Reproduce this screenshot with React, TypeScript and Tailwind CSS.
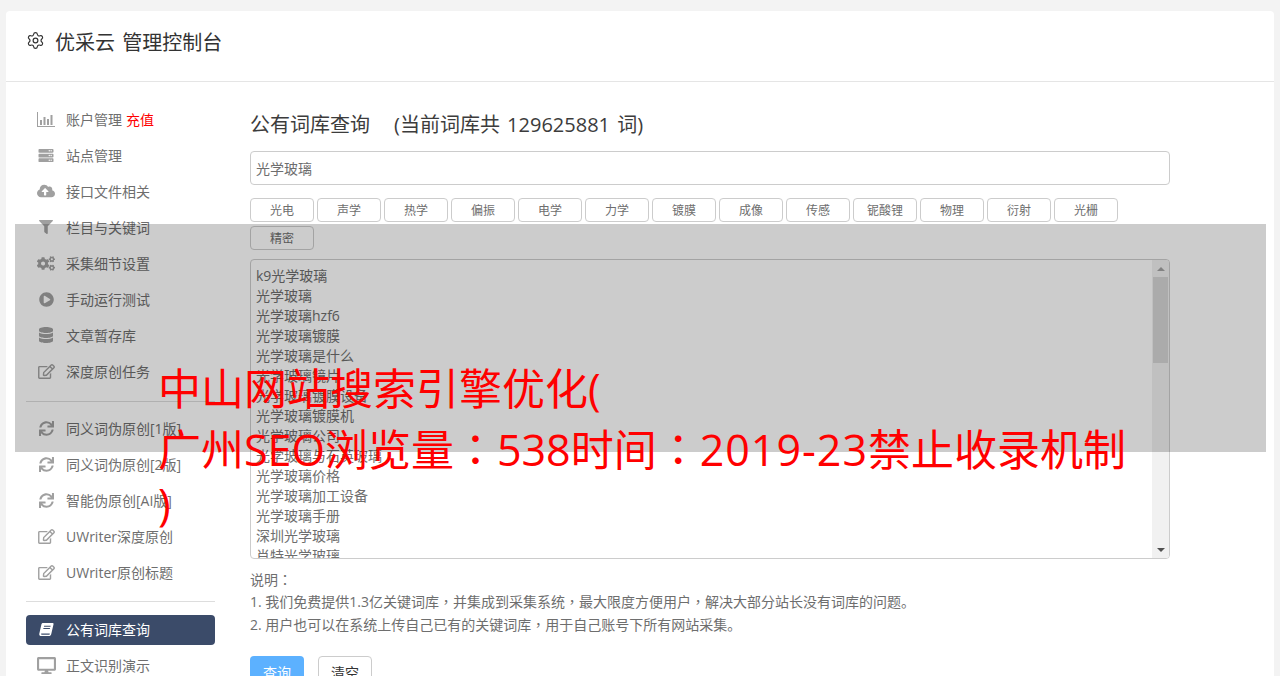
import { Settings } from 'lucide-react'
import {
  FaCloudUploadAlt,
  FaCogs,
  FaDatabase,
  FaDesktop,
  FaFilter,
  FaPlayCircle,
  FaRegEdit,
  FaServer,
  FaSync,
} from 'react-icons/fa'
import type { ReactNode } from 'react'

const fontStack = { fontFamily: '"Open Sans", "Noto Sans CJK SC", sans-serif' }

function ChartIcon() {
  return (
    <svg viewBox="0 0 18 15" className="h-[15px] w-[18px]" fill="currentColor">
      <path d="M0 0h1v14h17v1H0z" />
      <path d="M3 8h2v5H3zM6.5 5h2v8h-2zM10 7h2v6h-2zM13.5 3h2v10h-2z" />
    </svg>
  )
}

function BookIcon() {
  return (
    <svg viewBox="0 0 16 16" className="h-[15px] w-[15px]" fill="currentColor">
      <path
        fillRule="evenodd"
        d="M4.2 1h10.3c.8 0 1.2.6 1 1.4L13 13c-.3 1.2-1.1 2-2.4 2H2.4C1 15 0 14 .3 12.4L2.6 2.5C2.8 1.6 3.400 1 4.200 1zM5.500 4l-.3 1h7l.3-1zM4.800 6.500l-.3 1h7l.3-1zM2.400 12.200c-.3.9.2 1.400.9 1.400h7.400c.3 0 .6-.2.700-.6l.100-.800z"
      />
    </svg>
  )
}

interface NavItem {
  icon: ReactNode
  label: string
  extra?: string
}

const editIcon = <FaRegEdit className="h-[15px] w-[17px]" />
const syncIcon = <FaSync className="h-[15px] w-[15px]" />

const groupOne: NavItem[] = [
  { icon: <ChartIcon />, label: '账户管理', extra: '充值' },
  { icon: <FaServer className="h-[15px] w-[16px]" />, label: '站点管理' },
  { icon: <FaCloudUploadAlt className="h-[16px] w-[18px]" />, label: '接口文件相关' },
  { icon: <FaFilter className="h-[14px] w-[14px]" />, label: '栏目与关键词' },
  { icon: <FaCogs className="h-[15px] w-[18px]" />, label: '采集细节设置' },
  { icon: <FaPlayCircle className="h-[15px] w-[15px]" />, label: '手动运行测试' },
  { icon: <FaDatabase className="h-[16px] w-[14px]" />, label: '文章暂存库' },
  { icon: editIcon, label: '深度原创任务' },
]

const groupTwo: NavItem[] = [
  { icon: syncIcon, label: '同义词伪原创[1版]' },
  { icon: syncIcon, label: '同义词伪原创[2版]' },
  { icon: syncIcon, label: '智能伪原创[AI版]' },
  { icon: editIcon, label: 'UWriter深度原创' },
  { icon: editIcon, label: 'UWriter原创标题' },
]

const tags = ['光电', '声学', '热学', '偏振', '电学', '力学', '镀膜', '成像', '传感', '铌酸锂', '物理', '衍射', '光栅', '精密']

const words = [
  'k9光学玻璃',
  '光学玻璃',
  '光学玻璃hzf6',
  '光学玻璃镀膜',
  '光学玻璃是什么',
  '光学玻璃镜片',
  '光学玻璃镀膜设备',
  '光学玻璃镀膜机',
  '光学玻璃公司',
  '光学玻璃与石英玻璃',
  '光学玻璃价格',
  '光学玻璃加工设备',
  '光学玻璃手册',
  '深圳光学玻璃',
  '肖特光学玻璃',
]

// the TC cut centres its full-width punctuation, as the picture does
function Punct({ children }: { children: string }) {
  return <span className="font-['Noto_Sans_CJK_TC']">{children}</span>
}

function NavRow({ item }: { item: NavItem }) {
  return (
    <div className="flex h-9 items-center pb-[2px] text-[14px] text-[#6e6e6e]">
      <div className="flex w-10 justify-center text-[#a0a0a0]">{item.icon}</div>
      <span>{item.label}</span>
      {item.extra && <span className="ml-[4px] text-[#f00]">{item.extra}</span>}
    </div>
  )
}

export default function App() {
  return (
    <div className="relative h-screen overflow-hidden bg-[#f3f3f3] px-[6px] pt-[11px]" style={fontStack}>
      <div className="h-[800px] rounded-t-[4px] bg-white">
        <div className="flex h-[71px] items-center border-b border-[#e5e5e5] pl-[20px] text-[#333]">
          <Settings className="mt-[-12px] h-[19px] w-[19px]" strokeWidth={1.5} />
          <span className="mt-[-6px] ml-[10px] text-[20px] [word-spacing:2px]">优采云 管理控制台</span>
        </div>

        <div className="flex pl-[20px]">
          <div className="w-[189px] pt-[20px]">
            {groupOne.map((item) => (
              <NavRow key={item.label} item={item} />
            ))}
            <div className="mt-[11px] mb-[9px] h-px bg-[#ddd]" />
            {groupTwo.map((item) => (
              <NavRow key={item.label} item={item} />
            ))}
            <div className="mt-[10px] h-px bg-[#ddd]" />
            <div className="mt-[13px] mb-[3px] flex h-[30px] items-center rounded-[4px] bg-[#3b4b69] pb-[2px] text-[14px] text-white">
              <div className="flex w-10 justify-center">
                <BookIcon />
              </div>
              <span>公有词库查询</span>
            </div>
            <NavRow item={{ icon: <FaDesktop className="h-[17px] w-[19px]" />, label: '正文识别演示' }} />
          </div>

          <div className="ml-[35px] w-[920px] pt-[28px] text-[#6e6e6e]">
            <h2 className="flex h-[30px] items-center text-[20px] text-[#3c3c3c]">
              <span>公有词库查询</span>
              <span className="ml-[24px] [word-spacing:2px]">(当前词库共 129625881 词)</span>
            </h2>

            <div className="mt-[11px] flex h-[34px] items-center rounded-[4px] border border-[#ccc] px-[5px] text-[14px]">
              光学玻璃
            </div>

            <div className="mt-[13px] flex flex-wrap gap-x-[3px] gap-y-[4px]">
              {tags.map((tag) => (
                <button
                  key={tag}
                  className="flex h-[24px] w-[64px] items-center justify-center rounded-[4px] border border-[#ccc] pt-[2px] text-[12px] text-[#6e6e6e]"
                >
                  {tag}
                </button>
              ))}
            </div>

            <div className="mt-[9px] flex h-[300px] overflow-hidden rounded-[4px] border border-[#ccc] text-[14px] leading-[20px]">
              <div className="flex-1 overflow-hidden px-[5px] pt-[6px]">
                {words.map((word) => (
                  <div key={word}>{word}</div>
                ))}
              </div>
              <div className="flex w-[17px] flex-col items-center bg-[#f1f1f1]">
                <div className="flex h-[17px] items-center justify-center">
                  <div className="h-0 w-0 border-x-[4px] border-b-[4px] border-x-transparent border-b-[#a3a3a3]" />
                </div>
                <div className="h-[86px] w-[15px] bg-[#d6d6d6]" />
                <div className="flex-1" />
                <div className="flex h-[17px] items-center justify-center">
                  <div className="h-0 w-0 border-x-[4px] border-t-[4px] border-x-transparent border-t-[#505050]" />
                </div>
              </div>
            </div>

            <div className="mt-[9px] text-[14px] leading-[22.5px]">
              <p>
                说明<Punct>：</Punct>
              </p>
              <p className="mt-[-2px]">
                1. 我们免费提供1.3亿关键词库<Punct>，</Punct>并集成到采集系统<Punct>，</Punct>最大限度方便用户<Punct>，</Punct>
                解决大部分站长没有词库的问题。
              </p>
              <p>
                2. 用户也可以在系统上传自己已有的关键词库<Punct>，</Punct>用于自己账号下所有网站采集。
              </p>
            </div>

            <div className="mt-[19px] flex gap-[14px] text-[14px]">
              <button className="h-[34px] w-[54px] rounded-[4px] bg-[#5cb1ff] text-white">查询</button>
              <button className="h-[34px] w-[54px] rounded-[4px] border border-[#ccc] text-[#333]">清空</button>
            </div>
          </div>
        </div>
      </div>

      {/* grey band and red title sitting on top of the page */}
      <div className="absolute top-[224px] left-[15px] h-[228px] w-[1251px] bg-black/20" />
      <div className="absolute top-[359px] left-[158px] text-[43px] leading-[60px] whitespace-nowrap text-[#f00]">
        <div className="h-[60px]">中山网站搜索引擎优化(</div>
        <div className="mt-[-2px] h-[60px]">
          广州SEO浏览量<Punct>：</Punct>538时间<Punct>：</Punct>
          <span className="tracking-[1px]">2019-23</span>禁止收录机制
        </div>
        <div className="mt-[-3px] h-[60px]">)</div>
      </div>
    </div>
  )
}
